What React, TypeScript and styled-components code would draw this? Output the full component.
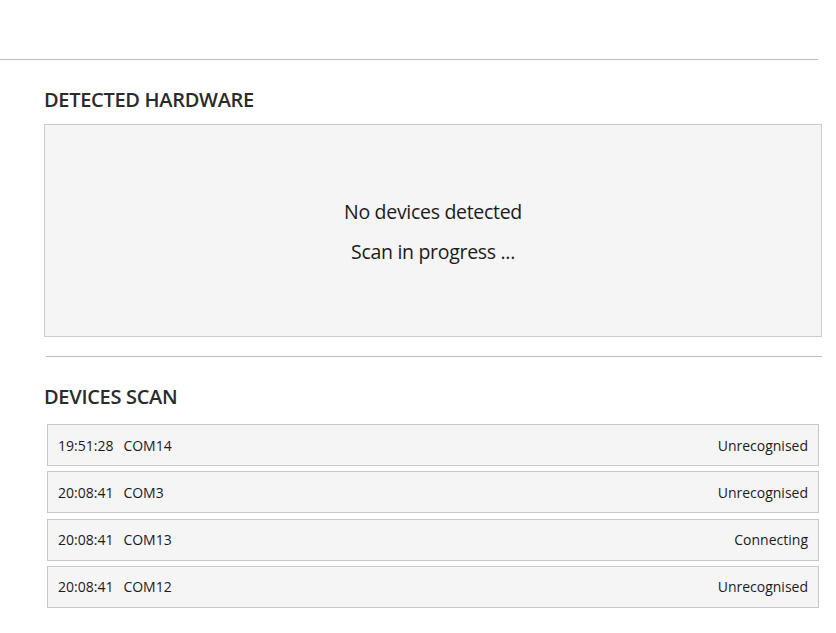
import React from 'react';
import styled, { createGlobalStyle } from 'styled-components';

type ScanEntry = {
	time: string;
	port: string;
	status: string;
};

const scans: ScanEntry[] = [
	{ time: '19:51:28', port: 'COM14', status: 'Unrecognised' },
	{ time: '20:08:41', port: 'COM3', status: 'Unrecognised' },
	{ time: '20:08:41', port: 'COM13', status: 'Connecting' },
	{ time: '20:08:41', port: 'COM12', status: 'Unrecognised' },
];

const GlobalStyle = createGlobalStyle`
	body {
		margin: 0;
		background: #ffffff;
		font-family: 'Open Sans', 'Noto Sans', sans-serif;
		color: #1b1b1b;
	}
`;

const App: React.FC = () => {
	return (
		<>
			<GlobalStyle />
			<Page>
				<TopRule />
				<Section>
					<SectionTitle>DETECTED HARDWARE</SectionTitle>
					<HardwarePanel>
						<PanelMessage>No devices detected</PanelMessage>
						<PanelMessage>Scan in progress ...</PanelMessage>
					</HardwarePanel>
					<Divider />
					<SectionTitle>DEVICES SCAN</SectionTitle>
					<ScanList>
						{scans.map((scan, i) => (
							<ScanRow key={i}>
								<ScanInfo>
									<span>{scan.time}</span>
									<span>{scan.port}</span>
								</ScanInfo>
								<ScanStatus>{scan.status}</ScanStatus>
							</ScanRow>
						))}
					</ScanList>
				</Section>
			</Page>
		</>
	);
};

const Page = styled.div`
	width: 836px;
	height: 633px;
	padding-top: 59px;
	box-sizing: border-box;
	overflow: hidden;
`;

const TopRule = styled.div`
	width: 818px;
	border-top: 1px solid #bdbdbd;
`;

const Section = styled.div`
	padding-left: 44px;
	width: 778px;
`;

const SectionTitle = styled.h2`
	margin: 28px 0 0 0;
	font-size: 20px;
	font-weight: 600;
	line-height: 24px;
	color: #2b2b2b;
	letter-spacing: -0.3px;
`;

const HardwarePanel = styled.div`
	margin-top: 12px;
	height: 213px;
	box-sizing: border-box;
	background: #f5f5f5;
	border: 1px solid #cccccc;
	display: flex;
	flex-direction: column;
	align-items: center;
	justify-content: center;
	gap: 15px;
	padding-top: 2px;
`;

const PanelMessage = styled.div`
	font-size: 19.5px;
	line-height: 25px;
	color: #1b1b1b;
	letter-spacing: -0.3px;
`;

const Divider = styled.div`
	margin: 19px 0 0 2px;
	border-top: 1px solid #bdbdbd;
`;

const ScanList = styled.div`
	margin: 15px 0 0 3px;
	width: 772px;
	display: flex;
	flex-direction: column;
	gap: 5.3px;
`;

const ScanRow = styled.div`
	height: 42px;
	box-sizing: border-box;
	background: #f5f5f5;
	border: 1px solid #c8c8c8;
	display: flex;
	align-items: center;
	justify-content: space-between;
	padding: 0 10px 0 10px;
	font-size: 14px;
	color: #1b1b1b;
`;

const ScanInfo = styled.div`
	display: flex;
	gap: 10px;
`;

const ScanStatus = styled.div``;

export default App;
